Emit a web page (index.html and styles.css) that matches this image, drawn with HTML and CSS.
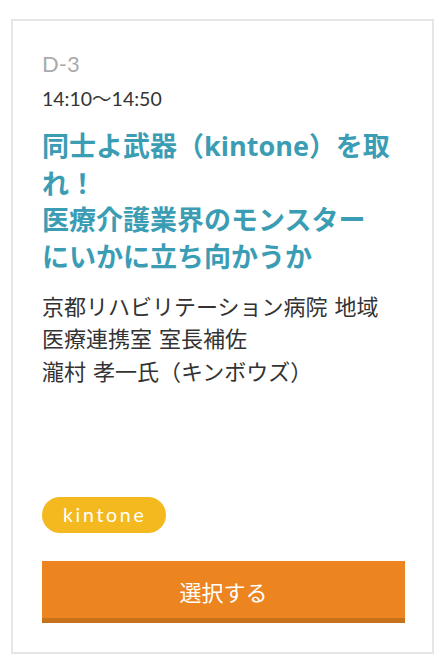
FILE: index.html
```html
<!DOCTYPE html>
<html lang="ja">
<head>
<meta charset="utf-8">
<link rel="stylesheet" href="styles.css">
</head>
<body>
<div class="page">
  <article class="card">
    <div class="session-id">D-3</div>
    <div class="session-time">14:10〜14:50</div>
    <h2 class="session-title">同士よ武器（<span class="latin">kintone</span>）を取れ！<br>医療介護業界のモンスターにいかに立ち向かうか</h2>
    <p class="speaker">京都リハビリテーション病院 地域医療連携室 室長補佐<br>瀧村 孝一氏（キンボウズ）</p>
    <div class="card-bottom">
      <span class="tag">kintone</span>
      <button class="select-btn" type="button">選択する</button>
    </div>
  </article>
</div>
</body>
</html>
```

FILE: styles.css
```css
html, body {
  margin: 0;
  padding: 0;
  background: #ffffff;
}

.page {
  padding: 19px 8px 0 11px;
}

.card {
  box-sizing: border-box;
  width: 423px;
  height: 635px;
  border: 2px solid #e6e6e6;
  padding: 30px 29px 29px 29px;
  display: flex;
  flex-direction: column;
  font-family: "Noto Sans CJK JP", "Noto Sans", sans-serif;
}

.session-id {
  font-family: Lato, "Noto Sans CJK JP", sans-serif;
  font-size: 22px;
  line-height: 26px;
  color: #aaaaaa;
}

.session-time {
  font-family: Lato, "Noto Sans CJK JP", sans-serif;
  font-size: 19.5px;
  line-height: 24px;
  margin-top: 10px;
  color: #333333;
}

.session-title {
  width: 349px;
  margin: 16px 0 0 0;
  font-size: 27px;
  line-height: 36.7px;
  font-weight: 700;
  color: #3b9db4;
}

.session-title .latin {
  font-family: "Open Sans", sans-serif;
}

.speaker {
  width: 350px;
  margin: 14px 0 0 0;
  font-size: 22px;
  line-height: 32.5px;
  word-spacing: 2px;
  color: #333333;
  font-weight: 400;
}

.card-bottom {
  margin-top: auto;
  display: flex;
  flex-direction: column;
  align-items: flex-start;
}

.tag {
  display: inline-block;
  box-sizing: border-box;
  height: 36px;
  padding: 0 20px 0 21px;
  border-radius: 18px;
  background: #f5b920;
  color: #ffffff;
  font-family: Lato, sans-serif;
  font-size: 19.5px;
  line-height: 36px;
  letter-spacing: 2.7px;
}

.select-btn {
  margin-top: 28px;
  box-sizing: border-box;
  width: 363px;
  height: 62px;
  border: none;
  border-bottom: 5px solid #c8711d;
  background-color: #ec8420;
  color: #ffffff;
  font-family: "Noto Sans CJK JP", sans-serif;
  font-size: 22px;
  padding: 2px 0 0 0;
  cursor: pointer;
}
```
